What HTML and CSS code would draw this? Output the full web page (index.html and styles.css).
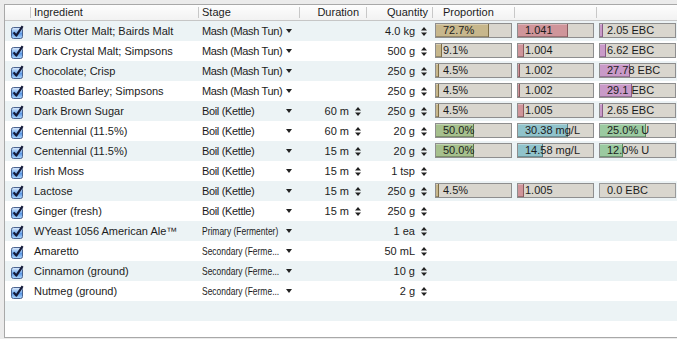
FILE: index.html
```html
<!DOCTYPE html>
<html lang="en">
  <head>
    <meta charset="UTF-8" />
    <meta name="viewport" content="width=device-width, initial-scale=1.0" />
    <title>Ingredients</title>
    <link rel="stylesheet" href="styles.css">
  </head>
  <body>
    <!-- shared icons -->
    <svg class="icons" width="0" height="0">
      <defs>
        <linearGradient id="box-fill" x1="0" y1="0" x2="0" y2="1">
          <stop offset="0" stop-color="#e2eefc" />
          <stop offset="0.45" stop-color="#7fb2ee" />
          <stop offset="0.55" stop-color="#5a98e6" />
          <stop offset="1" stop-color="#b4dafc" />
        </linearGradient>
      </defs>
      <symbol id="checkbox" viewBox="0 0 14 14">
        <rect x="1.5" y="2.5" width="11" height="11" rx="2" fill="url(#box-fill)" stroke="#4a6390" />
        <path d="M3.6 7.4 L6.3 10.6 L12.6 1.2" fill="none" stroke="#141a38" stroke-width="2.2" stroke-linejoin="round" />
      </symbol>
      <symbol id="arrow" viewBox="0 0 6 4">
        <polygon points="0,0 6,0 3,4" fill="#222" />
      </symbol>
      <symbol id="spinner" viewBox="0 0 6 9">
        <polygon points="0,3.6 6,3.6 3,0" fill="#222" />
        <polygon points="0,5.4 6,5.4 3,9" fill="#222" />
      </symbol>
    </svg>

    <div class="ingredients">

      <div class="row head">
        <div class="cell"></div>
        <div class="cell">Ingredient</div>
        <div class="cell">Stage</div>
        <div class="cell duration-head">Duration</div>
        <div class="cell quantity-head">Quantity</div>
        <div class="cell proportion-head">Proportion</div>
        <div class="cell"></div>
        <div class="cell"></div>
      </div>

      <div class="rows">

        <div class="row">
          <div class="cell check"><svg><use href="#checkbox" /></svg></div>
          <div class="cell name">Maris Otter Malt; Bairds Malt</div>
          <div class="cell stage"><span class="stage-name">Mash (Mash Tun)</span><svg class="arrow"><use href="#arrow" /></svg></div>
          <div class="cell num"></div>
          <div class="cell num">4.0 kg<svg class="spin"><use href="#spinner" /></svg></div>
          <div class="cell meter"><div class="bar"><div class="fill malt" style="width: 71%"></div><span class="label">72.7%</span></div></div>
          <div class="cell meter"><div class="bar"><div class="fill gravity" style="width: 67%"></div><span class="label">1.041</span></div></div>
          <div class="cell meter"><div class="bar"><div class="fill colour" style="width: 3px"></div><span class="label">2.05 EBC</span></div></div>
        </div>

        <div class="row">
          <div class="cell check"><svg><use href="#checkbox" /></svg></div>
          <div class="cell name">Dark Crystal Malt; Simpsons</div>
          <div class="cell stage"><span class="stage-name">Mash (Mash Tun)</span><svg class="arrow"><use href="#arrow" /></svg></div>
          <div class="cell num"></div>
          <div class="cell num">500 g<svg class="spin"><use href="#spinner" /></svg></div>
          <div class="cell meter"><div class="bar"><div class="fill malt" style="width: 6px"></div><span class="label">9.1%</span></div></div>
          <div class="cell meter"><div class="bar"><div class="fill gravity" style="width: 6px"></div><span class="label">1.004</span></div></div>
          <div class="cell meter"><div class="bar"><div class="fill colour" style="width: 6px"></div><span class="label">6.62 EBC</span></div></div>
        </div>

        <div class="row">
          <div class="cell check"><svg><use href="#checkbox" /></svg></div>
          <div class="cell name">Chocolate; Crisp</div>
          <div class="cell stage"><span class="stage-name">Mash (Mash Tun)</span><svg class="arrow"><use href="#arrow" /></svg></div>
          <div class="cell num"></div>
          <div class="cell num">250 g<svg class="spin"><use href="#spinner" /></svg></div>
          <div class="cell meter"><div class="bar"><div class="fill malt" style="width: 3px"></div><span class="label">4.5%</span></div></div>
          <div class="cell meter"><div class="bar"><div class="fill gravity" style="width: 2px"></div><span class="label">1.002</span></div></div>
          <div class="cell meter"><div class="bar"><div class="fill colour" style="width: 40%"></div><span class="label">27.78 EBC</span></div></div>
        </div>

        <div class="row">
          <div class="cell check"><svg><use href="#checkbox" /></svg></div>
          <div class="cell name">Roasted Barley; Simpsons</div>
          <div class="cell stage"><span class="stage-name">Mash (Mash Tun)</span><svg class="arrow"><use href="#arrow" /></svg></div>
          <div class="cell num"></div>
          <div class="cell num">250 g<svg class="spin"><use href="#spinner" /></svg></div>
          <div class="cell meter"><div class="bar"><div class="fill malt" style="width: 3px"></div><span class="label">4.5%</span></div></div>
          <div class="cell meter"><div class="bar"><div class="fill gravity" style="width: 2px"></div><span class="label">1.002</span></div></div>
          <div class="cell meter"><div class="bar"><div class="fill colour" style="width: 42%"></div><span class="label">29.1 EBC</span></div></div>
        </div>

        <div class="row">
          <div class="cell check"><svg><use href="#checkbox" /></svg></div>
          <div class="cell name">Dark Brown Sugar</div>
          <div class="cell stage"><span class="stage-name">Boil (Kettle)</span><svg class="arrow"><use href="#arrow" /></svg></div>
          <div class="cell num">60 m<svg class="spin"><use href="#spinner" /></svg></div>
          <div class="cell num">250 g<svg class="spin"><use href="#spinner" /></svg></div>
          <div class="cell meter"><div class="bar"><div class="fill malt" style="width: 3px"></div><span class="label">4.5%</span></div></div>
          <div class="cell meter"><div class="bar"><div class="fill gravity" style="width: 6px"></div><span class="label">1.005</span></div></div>
          <div class="cell meter"><div class="bar"><div class="fill colour" style="width: 3px"></div><span class="label">2.65 EBC</span></div></div>
        </div>

        <div class="row">
          <div class="cell check"><svg><use href="#checkbox" /></svg></div>
          <div class="cell name">Centennial (11.5%)</div>
          <div class="cell stage"><span class="stage-name">Boil (Kettle)</span><svg class="arrow"><use href="#arrow" /></svg></div>
          <div class="cell num">60 m<svg class="spin"><use href="#spinner" /></svg></div>
          <div class="cell num">20 g<svg class="spin"><use href="#spinner" /></svg></div>
          <div class="cell meter"><div class="bar"><div class="fill hops" style="width: 50%"></div><span class="label">50.0%</span></div></div>
          <div class="cell meter"><div class="bar"><div class="fill acid" style="width: 67%"></div><span class="label">30.38 mg/L</span></div></div>
          <div class="cell meter"><div class="bar"><div class="fill bitter" style="width: 61%"></div><span class="label">25.0% U</span></div></div>
        </div>

        <div class="row">
          <div class="cell check"><svg><use href="#checkbox" /></svg></div>
          <div class="cell name">Centennial (11.5%)</div>
          <div class="cell stage"><span class="stage-name">Boil (Kettle)</span><svg class="arrow"><use href="#arrow" /></svg></div>
          <div class="cell num">15 m<svg class="spin"><use href="#spinner" /></svg></div>
          <div class="cell num">20 g<svg class="spin"><use href="#spinner" /></svg></div>
          <div class="cell meter"><div class="bar"><div class="fill hops" style="width: 50%"></div><span class="label">50.0%</span></div></div>
          <div class="cell meter"><div class="bar"><div class="fill acid" style="width: 33%"></div><span class="label">14.58 mg/L</span></div></div>
          <div class="cell meter"><div class="bar"><div class="fill bitter" style="width: 30%"></div><span class="label">12.0% U</span></div></div>
        </div>

        <div class="row">
          <div class="cell check"><svg><use href="#checkbox" /></svg></div>
          <div class="cell name">Irish Moss</div>
          <div class="cell stage"><span class="stage-name">Boil (Kettle)</span><svg class="arrow"><use href="#arrow" /></svg></div>
          <div class="cell num">15 m<svg class="spin"><use href="#spinner" /></svg></div>
          <div class="cell num">1 tsp<svg class="spin"><use href="#spinner" /></svg></div>
          <div class="cell"></div>
          <div class="cell"></div>
          <div class="cell"></div>
        </div>

        <div class="row">
          <div class="cell check"><svg><use href="#checkbox" /></svg></div>
          <div class="cell name">Lactose</div>
          <div class="cell stage"><span class="stage-name">Boil (Kettle)</span><svg class="arrow"><use href="#arrow" /></svg></div>
          <div class="cell num">15 m<svg class="spin"><use href="#spinner" /></svg></div>
          <div class="cell num">250 g<svg class="spin"><use href="#spinner" /></svg></div>
          <div class="cell meter"><div class="bar"><div class="fill malt" style="width: 3px"></div><span class="label">4.5%</span></div></div>
          <div class="cell meter"><div class="bar"><div class="fill gravity" style="width: 6px"></div><span class="label">1.005</span></div></div>
          <div class="cell meter"><div class="bar empty"><span class="label">0.0 EBC</span></div></div>
        </div>

        <div class="row">
          <div class="cell check"><svg><use href="#checkbox" /></svg></div>
          <div class="cell name">Ginger (fresh)</div>
          <div class="cell stage"><span class="stage-name">Boil (Kettle)</span><svg class="arrow"><use href="#arrow" /></svg></div>
          <div class="cell num">15 m<svg class="spin"><use href="#spinner" /></svg></div>
          <div class="cell num">250 g<svg class="spin"><use href="#spinner" /></svg></div>
          <div class="cell"></div>
          <div class="cell"></div>
          <div class="cell"></div>
        </div>

        <div class="row">
          <div class="cell check"><svg><use href="#checkbox" /></svg></div>
          <div class="cell name">WYeast 1056 American Ale™</div>
          <div class="cell stage"><span class="stage-name"><span class="narrow">Primary (Fermenter)</span></span><svg class="arrow"><use href="#arrow" /></svg></div>
          <div class="cell num"></div>
          <div class="cell num">1 ea<svg class="spin"><use href="#spinner" /></svg></div>
          <div class="cell"></div>
          <div class="cell"></div>
          <div class="cell"></div>
        </div>

        <div class="row">
          <div class="cell check"><svg><use href="#checkbox" /></svg></div>
          <div class="cell name">Amaretto</div>
          <div class="cell stage"><span class="stage-name"><span class="narrow">Secondary (Ferme...</span></span><svg class="arrow"><use href="#arrow" /></svg></div>
          <div class="cell num"></div>
          <div class="cell num">50 mL<svg class="spin"><use href="#spinner" /></svg></div>
          <div class="cell"></div>
          <div class="cell"></div>
          <div class="cell"></div>
        </div>

        <div class="row">
          <div class="cell check"><svg><use href="#checkbox" /></svg></div>
          <div class="cell name">Cinnamon (ground)</div>
          <div class="cell stage"><span class="stage-name"><span class="narrow">Secondary (Ferme...</span></span><svg class="arrow"><use href="#arrow" /></svg></div>
          <div class="cell num"></div>
          <div class="cell num">10 g<svg class="spin"><use href="#spinner" /></svg></div>
          <div class="cell"></div>
          <div class="cell"></div>
          <div class="cell"></div>
        </div>

        <div class="row">
          <div class="cell check"><svg><use href="#checkbox" /></svg></div>
          <div class="cell name">Nutmeg (ground)</div>
          <div class="cell stage"><span class="stage-name"><span class="narrow">Secondary (Ferme...</span></span><svg class="arrow"><use href="#arrow" /></svg></div>
          <div class="cell num"></div>
          <div class="cell num">2 g<svg class="spin"><use href="#spinner" /></svg></div>
          <div class="cell"></div>
          <div class="cell"></div>
          <div class="cell"></div>
        </div>

        <!-- empty filler rows -->
        <div class="row"></div>
        <div class="row"></div>

      </div> <!-- rows -->
    </div>
  </body>
</html>
```

FILE: styles.css
```css
body {
  margin: 0;
  background: #ebebeb;
  font-family: "Liberation Sans", Arial, sans-serif;
  font-size: 11px;
  color: #1c1c1c;
}

.icons {
  position: absolute;
  width: 0;
  height: 0;
}

.ingredients {
  margin: 4px 0 0 4px;
  height: 332px;
  overflow: hidden;
  background: #fff;
  border: 1px solid #a8a8a8;
  border-right: 0;
}

.row {
  display: grid;
  grid-template-columns: 25px 168px 101px 67px 66px 82px 82px 81px;
  height: 20px;
}

.cell {
  white-space: nowrap;
  overflow: hidden;
}

/* header */
.head {
  height: 15px;
  line-height: 15px;
  border-bottom: 1px solid #c6c6c6;
  background: linear-gradient(#fdfdfd, #f2f2f2);
}

.head .cell {
  padding-left: 4px;
}

.head .cell + .cell {
  background: linear-gradient(#c8c8c8, #c8c8c8) left center / 1px 11px no-repeat;
}

.head .duration-head {
  text-align: right;
  padding-right: 7px;
}

.head .quantity-head {
  text-align: right;
  padding-right: 4px;
}

.head .proportion-head {
  padding-left: 11px;
}

/* body rows */
.rows {
  height: 316px;
  overflow: hidden;
}

.rows .row:nth-child(odd) {
  background: #ecf3f5;
}

.rows .cell {
  line-height: 20px;
}

.check {
  padding: 4px 0 0 5px;
}

.check svg {
  display: block;
  width: 14px;
  height: 14px;
}

.name {
  padding-left: 4px;
}

.stage {
  display: flex;
  align-items: center;
  padding: 0 7px 0 4px;
}

.stage-name {
  flex: 1;
  min-width: 0;
  overflow: hidden;
  letter-spacing: -0.35px;
}

.narrow {
  display: inline-block;
  letter-spacing: 0;
  transform: scaleX(0.77);
  transform-origin: left center;
}

.arrow {
  flex: none;
  width: 6px;
  height: 4px;
  margin-left: 2px;
}

.num {
  display: flex;
  justify-content: flex-end;
  align-items: center;
  gap: 6px;
  padding-right: 5px;
}

.spin {
  width: 6px;
  height: 9px;
}

/* proportion meters */
.meter {
  padding: 2px 0 0 3px;
}

.bar {
  display: grid;
  width: 77px;
  height: 15px;
  box-sizing: border-box;
  border: 1px solid #8e8e8e;
  background: #d9d6ce;
}

.bar.empty {
  border-color: #9a9a9a;
}

.bar .fill,
.bar .label {
  grid-area: 1 / 1;
}

.fill {
  justify-self: start;
  height: 100%;
  box-sizing: border-box;
  border-right: 1px solid;
  box-shadow: inset 0 -1px rgba(0, 0, 0, 0.25), inset 0 1px rgba(255, 255, 255, 0.3);
}

.label {
  padding-left: 7px;
  line-height: 13px;
}

.malt {
  background: #c7b78c;
  border-color: #7d6d46;
}

.gravity {
  background: #cf959a;
  border-color: #8a5a5f;
}

.colour {
  background: #c99ac8;
  border-color: #875a86;
}

.hops {
  background: #a6c08d;
  border-color: #5e774a;
}

.acid {
  background: #90c3cb;
  border-color: #4f7f86;
}

.bitter {
  background: #9bcaa0;
  border-color: #588a5e;
}
```
